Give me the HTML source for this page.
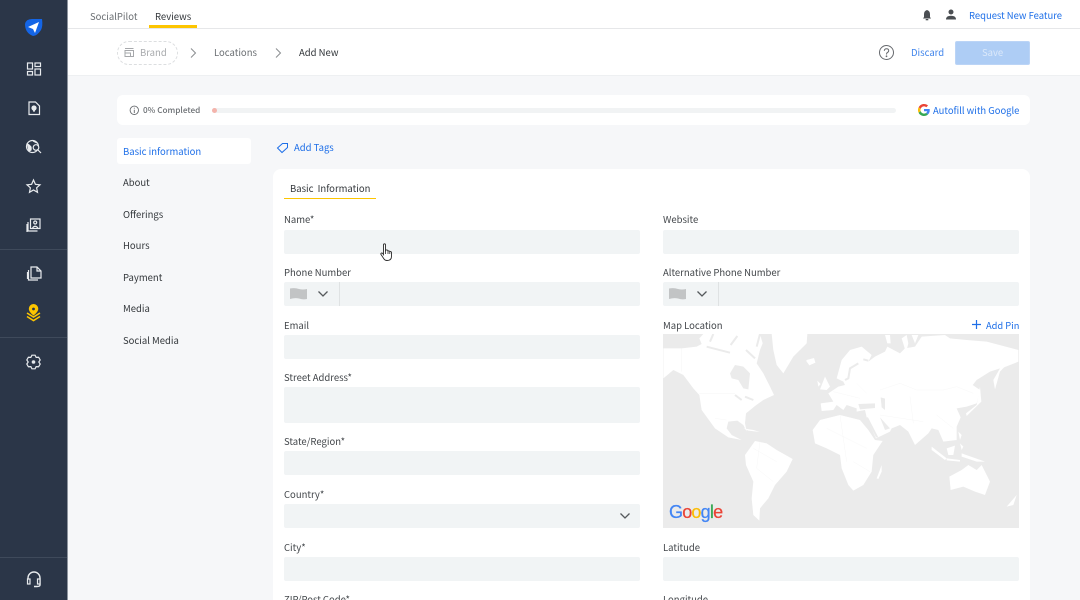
<!DOCTYPE html>
<html><head><meta charset="utf-8"><style>
*{box-sizing:border-box}
html,body{margin:0;padding:0;width:1080px;height:600px;overflow:hidden;background:#f6f7f9}
#p{position:relative;width:1080px;height:600px;overflow:hidden;background:#f6f7f9;font-family:"Noto Sans CJK JP","Liberation Sans",sans-serif;font-size:9.5px;color:#3f4347}
.a{position:absolute;white-space:nowrap;line-height:14px}
.i{position:absolute;background:#f1f4f5;border-radius:2px}
.l{position:absolute;white-space:nowrap;line-height:14px;font-size:9.5px;color:#42464a}
.m{position:absolute;left:123px;font-size:9.5px;line-height:14px;color:#33373b;white-space:nowrap}
.b,.m.b{color:#1e6fe8}
svg{position:absolute;overflow:visible}
</style></head><body><div id="p">
<div style="position:absolute;left:0;top:0;width:68px;height:600px;background:#2b3648;border-right:1px solid #8d949e"></div>
<div style="position:absolute;left:0;top:249px;width:67px;height:1px;background:#3f4a5b"></div>
<div style="position:absolute;left:0;top:337px;width:67px;height:1px;background:#3f4a5b"></div>
<div style="position:absolute;left:0;top:557px;width:67px;height:1px;background:#3f4a5b"></div>

<svg style="left:0;top:0" width="67" height="600" fill="none" stroke="#e8ebee" stroke-width="1.2">
<path d="M25 24Q26 19 32 19L42 19Q43 26 41 30Q37 36 33 36Q25 33 25 24Z" fill="#1465e6" stroke="none"/>
<path d="M28 27L39 22L35 33L33 29Z" fill="#fff" stroke="none"/>
<rect x="27.5" y="63" width="5" height="6"/><rect x="35" y="63" width="5.5" height="3.5"/><rect x="27.5" y="71.5" width="5" height="3.5"/><rect x="35" y="69" width="5.5" height="6"/>
<path d="M29 102H35.5L39.5 106V114.5H29Z"/><circle cx="34" cy="108" r="2" fill="#e8ebee"/><path d="M33 111H35"/>
<circle cx="32.500" cy="146.500" r="6"/><path d="M27.500 144Q32 146 31 150L29 151ZM33 141L37 143" fill="#e8ebee"/><circle cx="36" cy="147.500" r="2.800" fill="#2b3648"/><path d="M38 150L41 153"/>
<path d="M33.500 180L35.400 184.300L40 184.800L36.600 187.800L37.500 192.300L33.500 190L29.500 192.300L30.400 187.800L27 184.800L31.600 184.300Z"/>
<rect x="30.500" y="219" width="9.500" height="9.500"/><circle cx="35.200" cy="222.500" r="1.500"/><path d="M32.500 228Q35 224.500 38 228M28 222V231H37.500M27 224V232"/>
<path d="M31 267H37L41 271V278H31Z"/><path d="M37 267V271H41M28.500 270V280H38"/><path d="M27.500 272V279"/>
<path d="M33.500 304A4.800 4.800 0 0 1 38.300 309Q38 312 33.500 315.500Q29 312 28.800 309A4.800 4.800 0 0 1 33.500 304Z" fill="#fdc500" stroke="none"/><circle cx="33.500" cy="309" r="1.400" fill="#2b3648" stroke="none"/>
<path d="M27 313L33.500 317L40 313M27 316.500L33.500 320.500L40 316.500" stroke="#fdc500" stroke-width="1.600"/>
<g transform="translate(33.500 362)"><path d="M-1.570 -6.820L1.570 -6.820L2.650 -4.590L5.120 -4.770L6.690 -2.050L5.300 0L6.690 2.050L5.120 4.770L2.650 4.590L1.570 6.820L-1.570 6.820L-2.650 4.590L-5.120 4.770L-6.690 2.050L-5.300 0L-6.690 -2.050L-5.120 -4.770L-2.650 -4.590Z"/><circle r="1.800" fill="#e8ebee" stroke="none"/></g>
<path d="M28 581V578A6 6 0 0 1 40 578V585Q40 586.500 37 586.500H34" stroke-width="1.400"/><rect x="27.500" y="579" width="2.500" height="5" fill="#2b3648"/><rect x="37.500" y="579" width="2.500" height="5" fill="#2b3648"/>
</svg>

<div style="position:absolute;left:68px;top:0;width:1012px;height:29px;background:#fff;border-bottom:1px solid #e6e7e9"></div>
<div class="a" style="left:90px;top:9px;color:#6a6e72">SocialPilot</div>
<div class="a" style="left:155px;top:9px;color:#33373b">Reviews</div>
<div style="position:absolute;left:149px;top:25px;width:48px;height:3px;background:#fdc500"></div>
<svg style="left:920px;top:8px" width="14" height="14" fill="#4a4e52"><path d="M7 2Q10 3 10 6V9L11 10.500H3L4 9V6Q4 3 7 2Z"/><rect x="5.700" y="11" width="2.600" height="1.300"/></svg>
<svg style="left:944px;top:8px" width="14" height="14" fill="#4a4e52"><circle cx="7" cy="4" r="2.500"/><path d="M2 11.500Q2 7.800 7 7.800Q12 7.800 12 11.500Z"/></svg>
<div class="a b" style="left:969px;top:8px;font-size:9.450px">Request New Feature</div>

<div style="position:absolute;left:68px;top:29px;width:1012px;height:47px;background:#fff;border-bottom:1px solid #eef0f2"></div>
<div style="position:absolute;left:117px;top:41px;width:61px;height:24px;border:1px dashed #dcdee0;border-radius:12px"></div>
<svg style="left:124px;top:47px" width="11" height="11" fill="none" stroke="#a6a8ab"><path d="M1 1.500H9.500M1 3.500H9.500V9.500H1ZM1 6H6.500V9.500"/></svg>
<div class="a" style="left:140px;top:45px;color:#a8aaad">Brand</div>
<svg style="left:188px;top:46px" width="10" height="14" fill="none" stroke="#8a8d90"><path d="M3 2.500L7.500 7L3 11.500"/></svg>
<div class="a" style="left:214px;top:45px;color:#6a6e72">Locations</div>
<svg style="left:273px;top:46px" width="10" height="14" fill="none" stroke="#8a8d90"><path d="M3 2.500L7.500 7L3 11.500"/></svg>
<div class="a" style="left:299px;top:45px;color:#33373b">Add New</div>
<svg style="left:879px;top:45px" width="16" height="16" fill="none" stroke="#66696d"><circle cx="7.500" cy="7.500" r="7"/><path d="M5.300 5.800Q5.500 3.700 7.500 3.700Q9.700 3.700 9.700 5.600Q9.700 6.800 8.400 7.500Q7.500 8 7.500 9.500"/><circle cx="7.500" cy="11.300" r=".4"/></svg>
<div class="a b" style="left:911px;top:45px;opacity:.85">Discard</div>
<div style="position:absolute;left:955px;top:41px;width:75px;height:24px;background:#aecdf5;border-radius:2px;border:1px solid #bbd4f6"></div>
<div class="a" style="left:982px;top:45px;color:#dce9fa">Save</div>

<div style="position:absolute;left:117px;top:95px;width:913px;height:30px;background:#fff;border-radius:6px"></div>
<svg style="left:129px;top:105px" width="11" height="11" fill="none" stroke="#66696d" stroke-width=".9"><circle cx="5.300" cy="5.300" r="4.200"/><path d="M5.300 4.700V8M5.300 2.800V3.600"/></svg>
<div class="a" style="left:143px;top:103px;font-size:8.200px;color:#6a6e72;font-weight:500">0% Completed</div>
<div style="position:absolute;left:212px;top:108px;width:684px;height:5px;background:#f1f3f4;border-radius:3px"></div>
<div style="position:absolute;left:212px;top:108px;width:5px;height:5px;background:#f4b4ac;border-radius:3px"></div>
<svg style="left:918px;top:104px" width="12" height="12" viewBox="0 0 48 48"><path fill="#EA4335" d="M24 9.500c3.500 0 6.700 1.300 9.200 3.400l6.900-6.900C35.900 2.400 30.300 0 24 0 14.600 0 6.500 5.400 2.600 13.200l8 6.200C12.400 13.700 17.700 9.500 24 9.500z"/><path fill="#4285F4" d="M47 24.500c0-1.600-.2-3.200-.4-4.500H24v9h12.900c-.6 3-2.200 5.400-4.800 7.100l7.700 6C44.300 38 47 31.800 47 24.500z"/><path fill="#FBBC05" d="M10.500 28.600A14.500 14.500 0 0 1 10.500 19.400l-8-6.200a24 24 0 0 0 0 21.600z"/><path fill="#34A853" d="M24 48c6.500 0 11.900-2.100 15.900-5.800l-7.700-6c-2.200 1.400-4.900 2.300-8.200 2.300-6.300 0-11.600-4.200-13.500-9.900l-8 6.200C6.500 42.600 14.600 48 24 48z"/></svg>
<div class="a b" style="left:933px;top:103px;font-size:9.450px">Autofill with Google</div>

<div style="position:absolute;left:117px;top:138px;width:134px;height:26px;background:#fff;border-radius:3px"></div>
<div class="m b" style="top:144px">Basic information</div>
<div class="m" style="top:175px">About</div>
<div class="m" style="top:207px">Offerings</div>
<div class="m" style="top:238px">Hours</div>
<div class="m" style="top:270px">Payment</div>
<div class="m" style="top:301px">Media</div>
<div class="m" style="top:333px">Social Media</div>

<svg style="left:276px;top:142px" width="13" height="12" fill="none" stroke="#1e6fe8"><path d="M1.500 6L6.500 1.500H11.500V5.500L6 10.500Z"/></svg>
<div class="a b" style="left:294px;top:140px">Add Tags</div>

<div style="position:absolute;left:273px;top:169px;width:757px;height:431px;background:#fff;border-radius:8px 8px 0 0"></div>
<div class="a" style="left:290px;top:181px;color:#33373b;word-spacing:2px">Basic Information</div>
<div style="position:absolute;left:284px;top:198px;width:92px;height:1px;background:#fdc500"></div>

<div class="l" style="left:284px;top:212px">Name*</div><div class="i" style="left:284px;top:230px;width:356px;height:23.500px"></div>
<div class="l" style="left:663px;top:212px">Website</div><div class="i" style="left:663px;top:230px;width:356px;height:23.500px"></div>
<div class="l" style="left:284px;top:265px">Phone Number</div><div class="i" style="left:284px;top:282px;width:356px;height:24px"></div>
<div class="l" style="left:663px;top:265px">Alternative Phone Number</div><div class="i" style="left:663px;top:282px;width:356px;height:24px"></div>
<div style="position:absolute;left:339px;top:282px;width:1px;height:24px;background:#dfe2e3"></div>
<div style="position:absolute;left:718px;top:282px;width:1px;height:24px;background:#dfe2e3"></div>
<svg style="left:289px;top:287px" width="19" height="14" fill="#c2c4c5"><path d="M1 1.500Q6 .500 10 2Q14 3 18 2V12Q14 13 10 11.500Q6 10.500 1 12Z"/></svg>
<svg style="left:668px;top:287px" width="19" height="14" fill="#c2c4c5"><path d="M1 1.500Q6 .500 10 2Q14 3 18 2V12Q14 13 10 11.500Q6 10.500 1 12Z"/></svg>
<svg style="left:317px;top:289px" width="12" height="10" fill="none" stroke="#55595c" stroke-width="1.300"><path d="M1.500 2.500L6 7L10.500 2.500"/></svg>
<svg style="left:696px;top:289px" width="12" height="10" fill="none" stroke="#55595c" stroke-width="1.300"><path d="M1.500 2.500L6 7L10.500 2.500"/></svg>
<div class="l" style="left:284px;top:318px">Email</div><div class="i" style="left:284px;top:335px;width:356px;height:24px"></div>
<div class="l" style="left:663px;top:318px">Map Location</div>
<svg style="left:971px;top:319px" width="12" height="12" fill="none" stroke="#1e6fe8" stroke-width="1.200"><path d="M5.500 1V10M1 5.500H10"/></svg>
<div class="a b" style="left:986px;top:318px;font-size:9.300px">Add Pin</div>
<div class="l" style="left:284px;top:370px">Street Address*</div><div class="i" style="left:284px;top:387px;width:356px;height:36px"></div>
<div class="l" style="left:284px;top:434px">State/Region*</div><div class="i" style="left:284px;top:451px;width:356px;height:24px"></div>
<div class="l" style="left:284px;top:487px">Country*</div><div class="i" style="left:284px;top:504px;width:356px;height:24px"></div>
<svg style="left:619px;top:511px" width="12" height="10" fill="none" stroke="#55595c" stroke-width="1.300"><path d="M1.500 2.500L6 7L10.500 2.500"/></svg>
<div class="l" style="left:284px;top:540px">City*</div><div class="i" style="left:284px;top:557px;width:356px;height:24px"></div>
<div class="l" style="left:663px;top:540px">Latitude</div><div class="i" style="left:663px;top:557px;width:356px;height:24px"></div>
<div class="l" style="left:284px;top:592px">ZIP/Post Code*</div>
<div class="l" style="left:663px;top:592px">Longitude</div>

<div style="position:absolute;left:663px;top:334px;width:356px;height:194px;background:#ebebeb;overflow:hidden">
<svg style="left:-3px;top:-19px" width="365" height="220" viewBox="0 0 1095 660" fill="#fff" stroke="none">
<path d="M255 420L285 378L320 385L350 405L398 432L380 470L345 510L325 550L300 580L298 617L280 600L275 550L280 500L258 450Z"/>
<path d="M458 345L480 315L540 300L600 315L625 345L645 375L668 378L640 420L635 470L610 510L580 527L565 510L545 460L540 420L500 400L465 385Z"/>
<path d="M868 485L905 465L925 450L950 465L965 450L990 500L975 540L945 530L910 515L872 525Z"/>
<path d="M650 490L665 450L665 470L655 492Z"/>
<path d="M815 395L860 430L855 435L815 405ZM860 430L900 435L900 440L860 436ZM860 400L885 392L880 420L865 420ZM905 415L975 440L950 440L905 425ZM900 385L910 395L905 405ZM895 350L905 360L900 375ZM1040 575L1070 540L1060 570Z"/>
<g transform="translate(0 45)">
<path d="M10 55L65 55L110 50L125 42L118 25L130 12L300 12L308 40L300 60L290 100L310 130L330 170L342 195L310 210L285 228L258 250L255 280L260 305L250 285L232 272L205 275L200 295L215 315L245 330L205 322L165 295L125 240L118 195L100 175L70 135L40 120L10 145Z"/>
<path d="M335 12L442 12L440 40L400 80L370 130L350 105L340 60Z"/>
<path d="M438 92L462 86L466 98L448 106ZM250 295L280 300L300 306L265 302Z"/>
<path d="M210 130L225 105L250 110L270 130L265 178L250 175L235 150L215 145Z" fill="#ebebeb"/>
<path d="M140 50L210 68M212 45L232 18M258 60L285 85M300 12L290 50M160 12L150 35M225 195L245 210M255 200L280 210" fill="none" stroke="#ebebeb" stroke-width="6"/>
<path d="M118 190H225M65 55V125M165 265L200 270" fill="none" stroke="#f3f3f3"/>
</g>
<g transform="translate(420 45)">
<path d="M62 220L100 215L85 190L115 170L135 165L130 155L110 145L125 90L150 60L185 50L215 75L205 95L225 80L255 65L262 50L300 70L315 55L345 50L365 20L435 15L450 25L500 30L560 35L655 60L655 95L612 112L600 125L585 178L580 150L600 115L570 125L530 150L518 165L540 180L530 220L500 230L470 235L482 262L470 290L470 330L430 335L415 300L395 295L385 310L345 345L325 305L300 285L275 295L270 305L228 325L200 262L195 240L170 245L170 235L140 225L130 240L110 225L100 240L65 243Z"/>
<path d="M255 15L270 15L272 40L262 40ZM305 25L320 15L325 40L318 68ZM335 15H355L345 40ZM540 170L544 215L500 258L498 250L530 225ZM60 178L75 140L90 170L80 180ZM52 152L62 162L55 170ZM20 90L42 84L46 98L28 105ZM0 15H20L16 40L0 60Z"/>
<path d="M175 100L150 115L145 145L135 150M205 92L190 88" fill="none" stroke="#ebebeb" stroke-width="6"/>
<path d="M175 222L225 220L225 234L180 238Z" fill="#ebebeb"/>
<path d="M242 202L255 206L255 240L245 232Z" fill="#ebebeb"/>
<path d="M198 262L204 262L235 322L228 322Z" fill="#ebebeb"/>
<path d="M240 262L270 295L255 300Z" fill="#ebebeb"/>
<path d="M240 180L300 160L350 180L430 180L470 170L520 190M240 255L370 275M410 255L460 295M100 185L180 205M170 160L200 190M330 200L340 280" fill="none" stroke="#f3f3f3"/>
</g>
<path d="M280 400L350 440M300 380L290 460L340 500M500 340L620 400M540 300L560 440M580 440L630 470" fill="none" stroke="#f3f3f3"/>
</svg>
<div style="position:absolute;left:6px;top:166px;font:18px/24px 'Liberation Sans',sans-serif;letter-spacing:-.8px;-webkit-text-stroke:.25px"><span style="color:#4285f4">G</span><span style="color:#ea4335">o</span><span style="color:#fbbc05">o</span><span style="color:#4285f4">g</span><span style="color:#34a853">l</span><span style="color:#ea4335">e</span></div>
</div>

<svg style="left:379px;top:243px" width="15" height="19" viewBox="0 0 15 19"><path d="M4.500 2Q4.500 .800 5.500 .800Q6.500 .800 6.500 2V7.500Q7 6.800 8 7Q8.800 7 9 8Q10 7.500 10.800 8.500Q12.200 8.300 12.500 9.500V13.500Q12.500 17.500 8 17.500Q6 17.500 5 16L2 11.500Q1.500 10.500 2.500 10Q3.500 9.800 4.500 11.500Z" fill="#fff" stroke="#2a2a2a" stroke-width=".9"/><path d="M6.500 7.500V11M9 8V11M10.800 8.500V11" stroke="#2a2a2a" stroke-width=".8" fill="none"/></svg>
</div></body></html>
